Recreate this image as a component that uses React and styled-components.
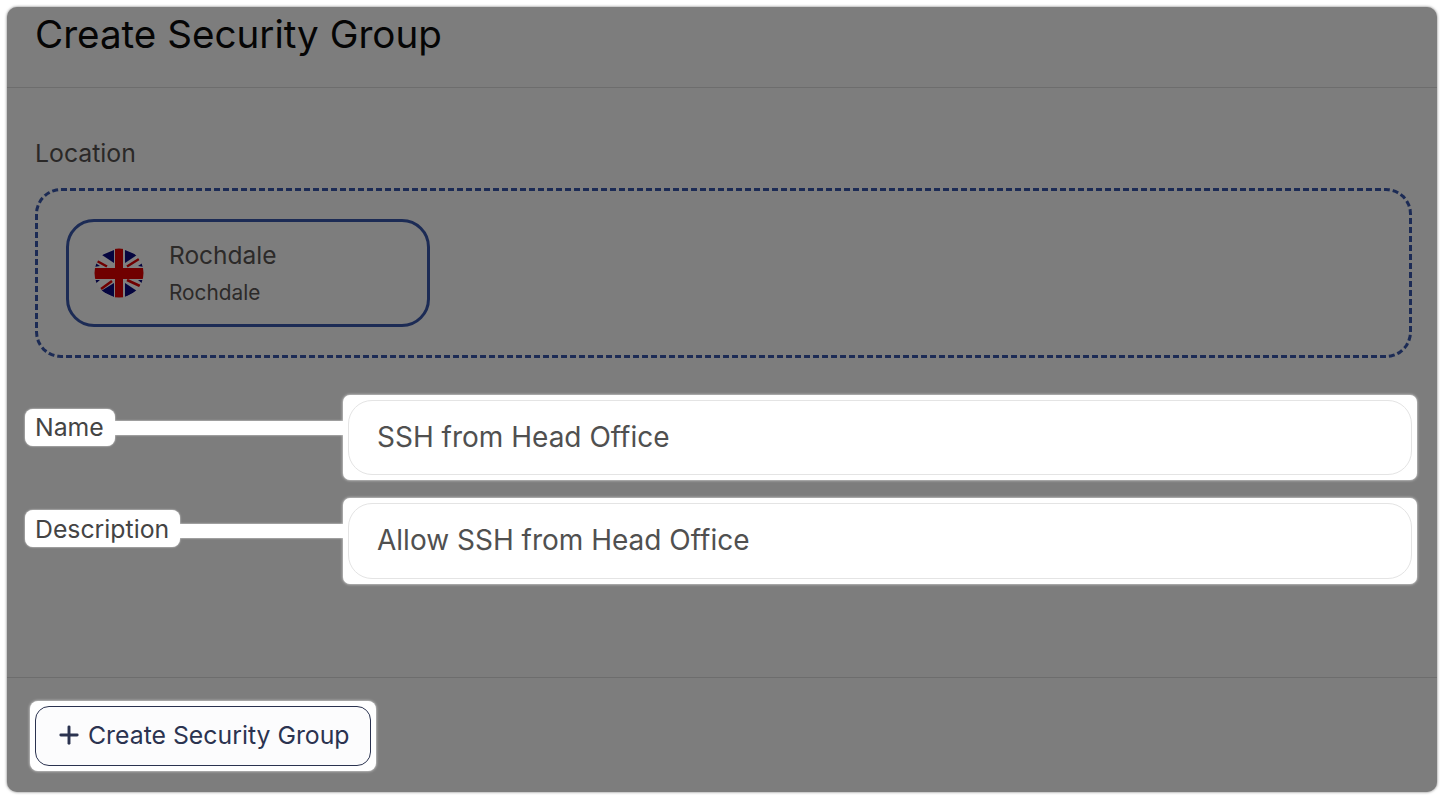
import React from 'react';
import styled, {createGlobalStyle} from 'styled-components';
import {Plus} from 'lucide-react';

const Global = createGlobalStyle`
    html, body {
        margin: 0;
        padding: 0;
        background: #ffffff;
    }
    body {
        font-family: Inter, "Noto Sans", sans-serif;
    }
`;

const Panel = styled.div`
    box-sizing: border-box;
    display: flex;
    flex-direction: column;
    width: 1430px;
    height: 785px;
    margin: 7px;
    background: #7d7d7d;
    border-radius: 10px;
    box-shadow: 0 0 3px rgba(0, 0, 0, 0.55);
`;

const Header = styled.div`
    box-sizing: border-box;
    height: 81px;
    padding: 5px 28px 0;
    border-bottom: 1px solid #6d6d6d;
`;

const Title = styled.h1`
    margin: 0;
    font-size: 38.6px;
    line-height: 44px;
    font-weight: 400;
    color: #050505;
`;

const Body = styled.div`
    flex: 1;
    display: flex;
    flex-direction: column;
    padding: 49px 25px 0 28px;
`;

const SectionLabel = styled.div`
    font-size: 24.8px;
    line-height: 32px;
    font-weight: 400;
    color: #2a2827;
`;

const DropZone = styled.div`
    box-sizing: border-box;
    height: 170px;
    margin-top: 19px;
    padding: 28px;
    border: 3px dashed #1c2b55;
    border-radius: 26px;
`;

const LocationCard = styled.div`
    box-sizing: border-box;
    display: flex;
    align-items: center;
    gap: 25px;
    width: 364px;
    height: 108px;
    padding-left: 25px;
    border: 3px solid #1c2b55;
    border-radius: 28px;
`;

const LocationText = styled.div`
    display: flex;
    flex-direction: column;
    gap: 10px;
    color: #2c2a29;
`;

const LocationName = styled.div`
    font-size: 24.5px;
    line-height: 30px;
`;

const LocationSub = styled.div`
    font-size: 20.8px;
    line-height: 26px;
`;

const FieldRow = styled.div`
    display: flex;
    align-items: flex-start;
    margin-top: ${p => p.$top}px;
    margin-left: -10px;
`;

const FieldLabel = styled.div`
    flex: none;
    height: 37px;
    margin-top: ${p => p.$top}px;
    padding: 0 11px 0 10px;
    line-height: ${p => p.$line}px;
    font-size: 24.8px;
    font-weight: 400;
    color: #444444;
    background: #ffffff;
    border-radius: 8px;
    box-shadow: 0 0 2px rgba(255, 255, 255, 0.9);
`;

const Connector = styled.div`
    flex: 1;
    height: 14px;
    margin-top: 26px;
    background: #ffffff;
    box-shadow: 0 0 2px rgba(255, 255, 255, 0.8);
`;

const InputFrame = styled.div`
    box-sizing: border-box;
    flex: none;
    width: 1074px;
    margin-right: -5px;
    padding: 5px;
    background: #ffffff;
    border-radius: 7px;
    box-shadow: 0 0 3px rgba(255, 255, 255, 0.9);
`;

const TextInput = styled.input`
    box-sizing: border-box;
    display: block;
    width: 100%;
    height: ${p => p.$height}px;
    padding: 0 28px 2px;
    font-family: inherit;
    font-size: 28px;
    color: #505050;
    background: #ffffff;
    border: 1px solid #e4e4e4;
    border-radius: 24px;
    outline: none;
`;

const Footer = styled.div`
    box-sizing: border-box;
    height: 115px;
    padding: 23px 0 0 23px;
    border-top: 1px solid #6d6d6d;
`;

const ButtonFrame = styled.div`
    box-sizing: border-box;
    width: 346px;
    padding: 5px;
    background: #ffffff;
    border-radius: 8px;
    box-shadow: 0 0 3px rgba(255, 255, 255, 0.9);
`;

const CreateButton = styled.button`
    box-sizing: border-box;
    display: flex;
    align-items: center;
    gap: 5px;
    width: 336px;
    height: 60px;
    padding: 0 0 2px 19px;
    font-family: inherit;
    font-size: 24.8px;
    font-weight: 400;
    color: #2b3350;
    background: #fcfcfd;
    border: 1px solid #2b3350;
    border-radius: 14px;
`;

function UkFlag() {
    return (
        <svg width="50" height="50" viewBox="0 0 50 50" style={{flex: 'none'}}>
            <defs>
                <clipPath id="flagClip">
                    <circle cx="25" cy="25" r="24.5" />
                </clipPath>
            </defs>
            <g clipPath="url(#flagClip)">
                <rect width="50" height="50" fill="#808080" />
                <path d="M8 7L20 2L20 15Z M31 2L43 7L31 15Z M7 43L20 35L20 49Z M31 35L43 43L31 49Z" fill="#05053f" />
                <path d="M0 14L6 18L0 19Z M50 14L44 18L50 19Z M0 32L6 32L0 37Z M50 32L44 32L50 37Z" fill="#05053f" />
                <path d="M3 13L13 18.5 M33 18.5L45 11 M7 41L18 33 M33 32L46 38" stroke="#700000" strokeWidth="2.5" fill="none" />
                <rect x="21" y="0" width="8" height="50" fill="#700000" />
                <rect x="0" y="20" width="50" height="11" fill="#700000" />
            </g>
        </svg>
    );
}

export default function App() {
    return (
        <>
            <Global />
            <Panel>
                <Header>
                    <Title>Create Security Group</Title>
                </Header>
                <Body>
                    <SectionLabel>Location</SectionLabel>
                    <DropZone>
                        <LocationCard>
                            <UkFlag />
                            <LocationText>
                                <LocationName>Rochdale</LocationName>
                                <LocationSub>Rochdale</LocationSub>
                            </LocationText>
                        </LocationCard>
                    </DropZone>
                    <FieldRow $top={37}>
                        <FieldLabel $top={14} $line={36}>Name</FieldLabel>
                        <Connector />
                        <InputFrame>
                            <TextInput $height={75} defaultValue="SSH from Head Office" />
                        </InputFrame>
                    </FieldRow>
                    <FieldRow $top={18}>
                        <FieldLabel $top={12} $line={39}>Description</FieldLabel>
                        <Connector />
                        <InputFrame>
                            <TextInput $height={76} defaultValue="Allow SSH from Head Office" />
                        </InputFrame>
                    </FieldRow>
                </Body>
                <Footer>
                    <ButtonFrame>
                        <CreateButton>
                            <Plus size={28} strokeWidth={2.5} />
                            Create Security Group
                        </CreateButton>
                    </ButtonFrame>
                </Footer>
            </Panel>
        </>
    );
}
